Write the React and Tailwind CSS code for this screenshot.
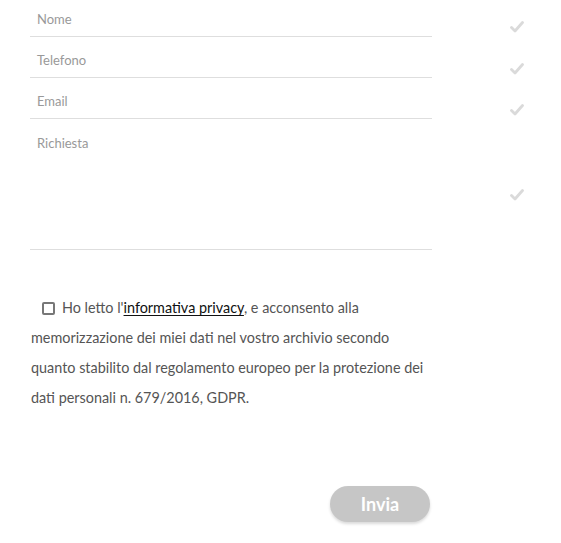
import React from "react";

function Check() {
  return (
    <svg width="14" height="12" viewBox="0 0 14 12" className="block">
      <path d="M1.5 6.5 L5 10 L12.5 1.5" fill="none" stroke="#dadada" strokeWidth="2.8" strokeLinecap="round" strokeLinejoin="round" />
    </svg>
  );
}

function Row({ label, boxClass, checkClass }) {
  return (
    <div className="flex">
      <div className={"w-[402px] border-b border-[#dedede] pl-[7px] text-[13px] leading-4 text-[#999] " + boxClass}>{label}</div>
      <div className={"ml-[78px] " + checkClass}><Check /></div>
    </div>
  );
}

export default function App() {
  return (
    <div className="w-[561px] h-[543px] bg-white pl-[30px] font-['Lato','Open_Sans',sans-serif]">
      <Row label="Nome" boxClass="h-[37px] pt-[11px]" checkClass="mt-[21px]" />
      <Row label="Telefono" boxClass="h-[41px] pt-[15px]" checkClass="mt-[26px]" />
      <Row label="Email" boxClass="h-[41px] pt-[15px]" checkClass="mt-[26px]" />
      <Row label="Richiesta" boxClass="h-[131px] pt-[16px]" checkClass="mt-[70px]" />
      <p className="mt-[43px] w-[430px] pl-px text-[14.4px] leading-[30px] text-[#555]">
        <span className="inline-block align-[-2px] ml-[11px] mr-[7px] w-[13px] h-[13px] rounded-[2px] border-2 border-[#777]"></span>
        Ho letto l'<a className="text-[#111] underline underline-offset-2">informativa privacy</a>, e acconsento alla
        <br />
        memorizzazione dei miei dati nel vostro archivio secondo
        <br />
        quanto stabilito dal regolamento europeo per la protezione dei
        <br />
        dati personali n. 679/2016, GDPR.
      </p>
      <div className="mt-[73px] w-[400px] flex justify-end">
        <button className="w-[100px] h-[36px] rounded-full bg-[#c6c6c6] text-white font-bold text-[18px] shadow-[0_2px_3px_rgba(0,0,0,0.15)]">Invia</button>
      </div>
    </div>
  );
}
